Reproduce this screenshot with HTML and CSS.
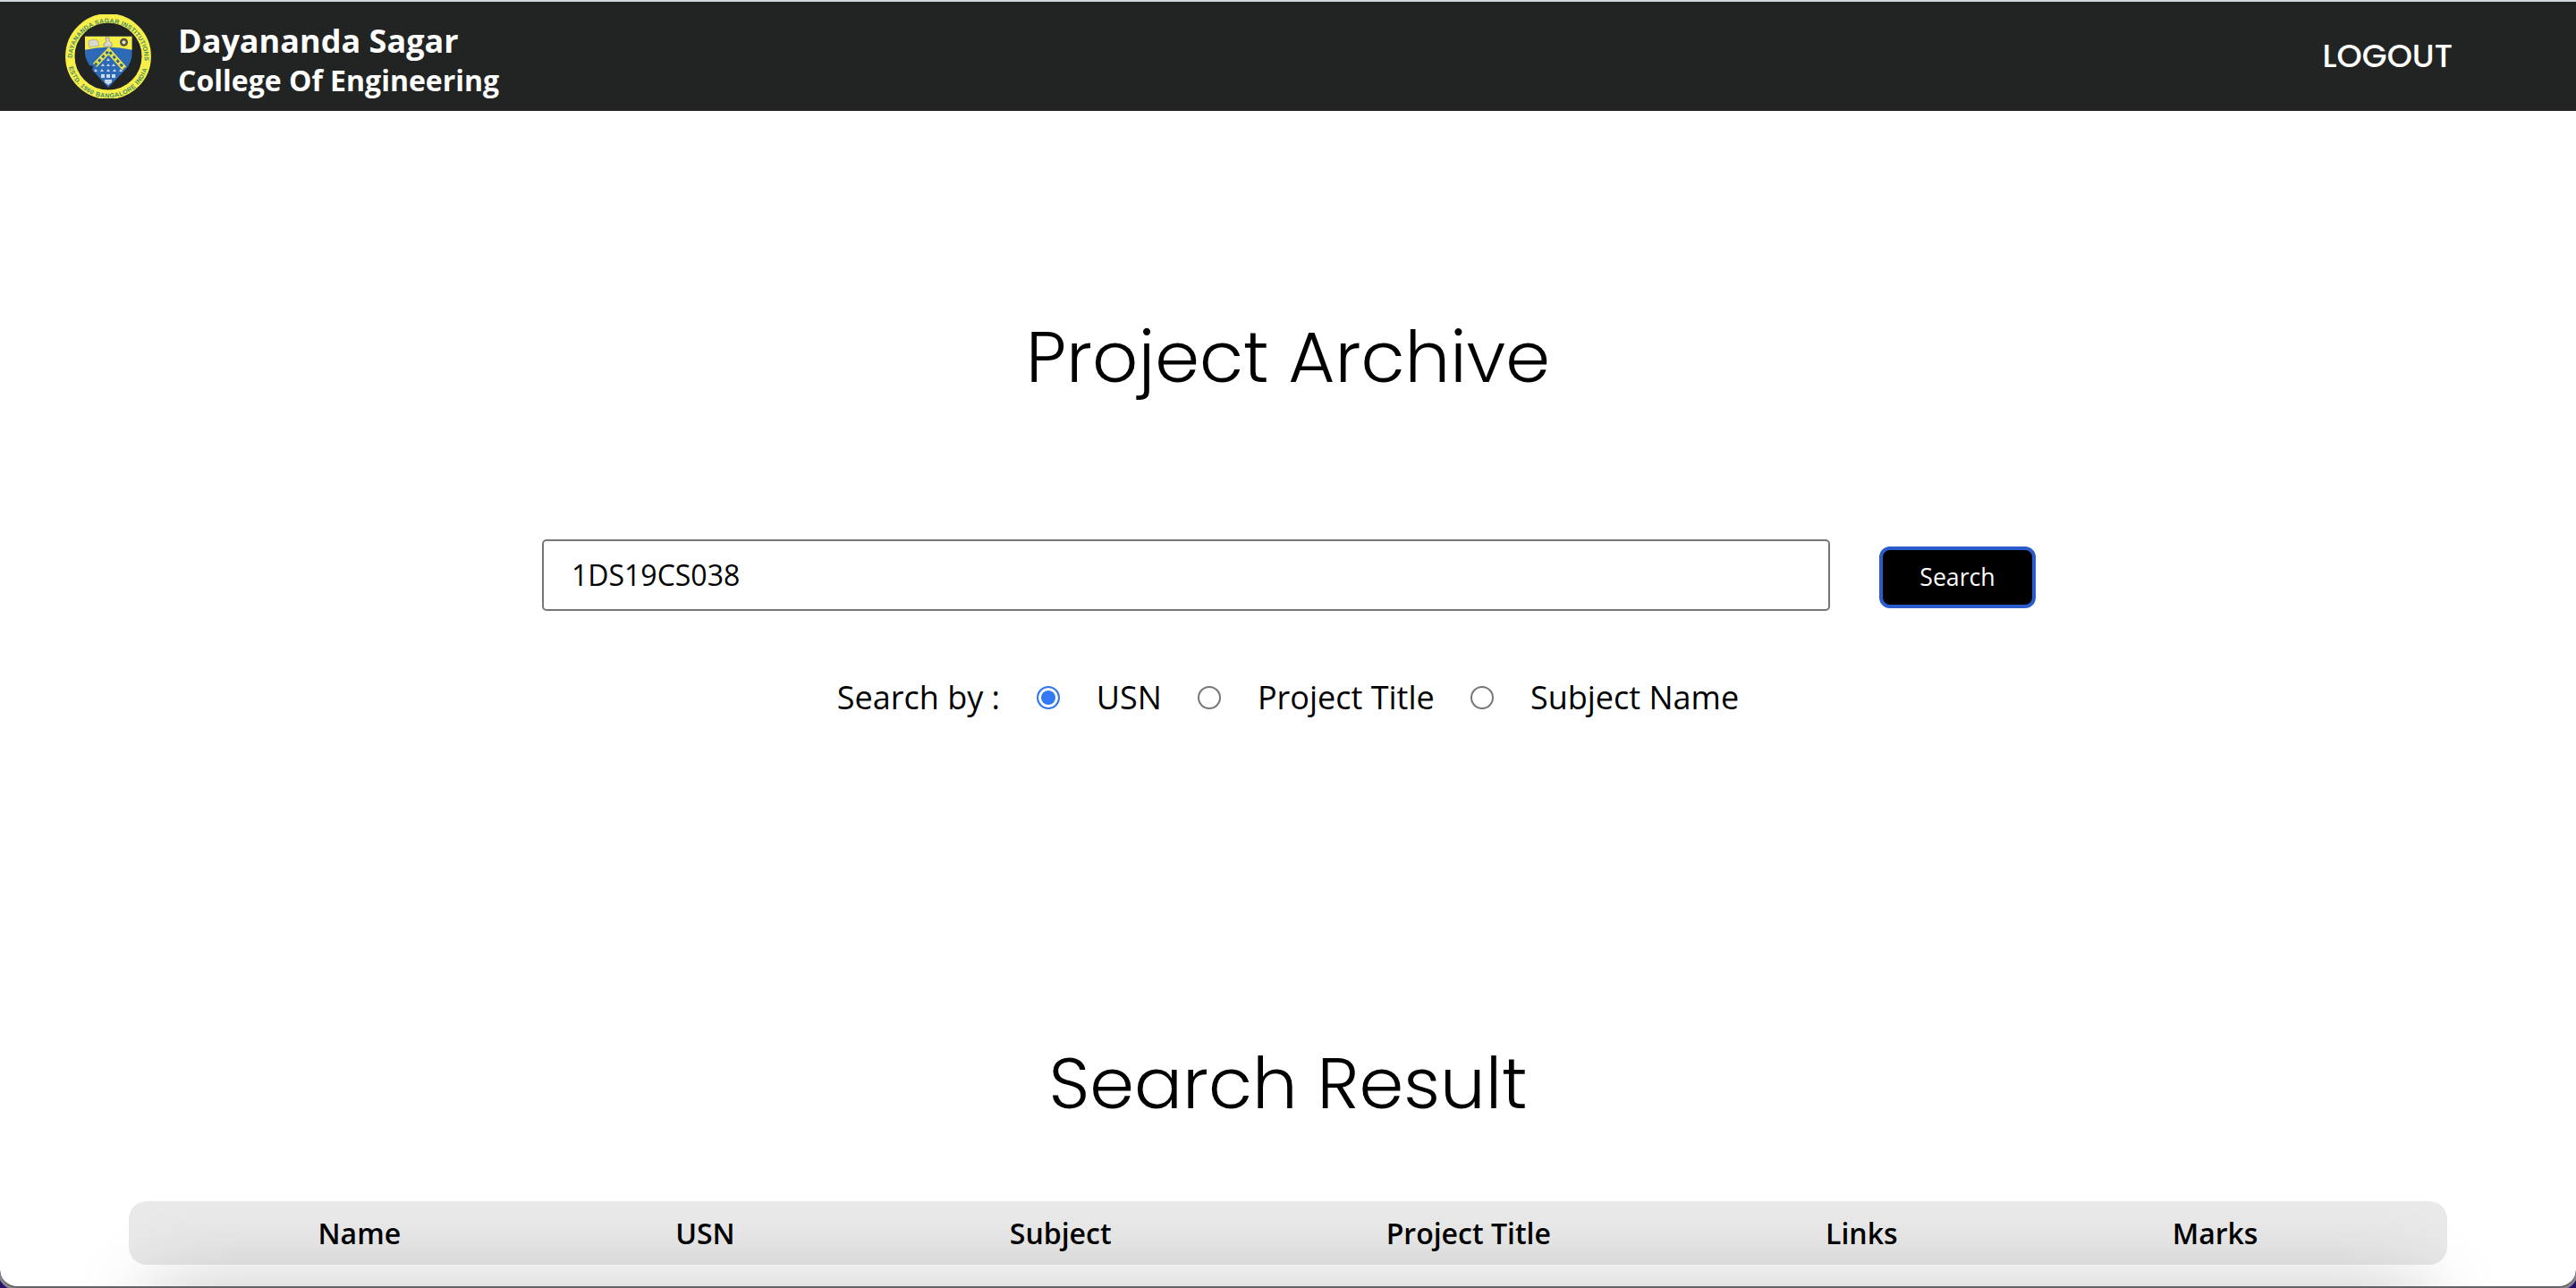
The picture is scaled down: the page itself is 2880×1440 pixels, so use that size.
FILE: index.html
```html
<!DOCTYPE html>
<html lang="en">
<head>
<meta charset="utf-8">
<title>Project Archive</title>
<link rel="stylesheet" href="styles.css">
</head>
<body>
<header class="navbar">
  <div class="brand">
    <svg class="crest" viewBox="0 0 96 94" width="96" height="94" aria-hidden="true">
      <defs>
        <path id="arc-top" d="M7.500 50 A40.500 40.500 0 1 1 88.500 50"/>
        <path id="arc-bottom" d="M2.800 53 A45.500 45.500 0 0 0 93.200 53"/>
      </defs>
      <circle cx="48" cy="47" r="42.700" fill="none" stroke="#f8ee48" stroke-width="10.400"/>
      <text class="crest-text"><textPath href="#arc-top" startOffset="1" textLength="128">DAYANANDA SAGAR INSTITUTIONS</textPath></text>
      <text class="crest-text"><textPath href="#arc-bottom" startOffset="6" textLength="118">ESTD. 1960 BANGALORE INDIA</textPath></text>
      <path d="M22 24.700H74.500V46Q74 53 69 60L48 82L30 62L31 58L27 57Q22.500 50 22 44Z" fill="#2d69b5"/>
      <path d="M22 24.700H74.500V39.700Q48 34 22 39.700Z" fill="#f8ee48"/>
      <path d="M26 30l5-2 5 1 2 6-6 1-5 1z" fill="#d9d9d0" stroke="#99997e" stroke-width=".6"/>
      <path d="M45 26h4v4l3 2v4h-9v-3l3-2z" fill="#d9d9d0" stroke="#77776a" stroke-width=".6"/>
      <circle cx="65.500" cy="31.300" r="3.300" fill="#e5e4d2" stroke="#514d3f" stroke-width="2.400"/>
      <path d="M33 57L48.500 41L66 60.500" fill="none" stroke="#e3df50" stroke-width="6"/>
      <path d="M33 57L48.500 41L66 60.500" fill="none" stroke="#2b608c" stroke-width="2.800" stroke-dasharray="3.200 2.800"/>
      <g fill="#c9d9ee">
        <path d="M48 49l2 3h-4zM42 55l2 3h-4zM48 55l2 3h-4zM54 55l2 3h-4zM34 61l2 3h-4zM41 61l2 3h-4zM48 61l2 3h-4zM55 61l2 3h-4zM62 61l2 3h-4z"/>
        <path d="M40 67h4v4h-4zM46 67h4v4h-4zM52 67h4v4h-4zM44 73h8v3l-4 3-4-3z"/>
      </g>
    </svg>
    <div class="brand-name">
      <span class="brand-line1">Dayananda Sagar</span>
      <span class="brand-line2">College Of Engineering</span>
    </div>
  </div>
  <a class="logout">LOGOUT</a>
</header>
<main>
  <h1 class="heading">Project Archive</h1>
  <form class="search-form">
    <div class="search-row">
      <input class="search-input" type="text" value="1DS19CS038">
      <button class="search-button" type="button">Search</button>
    </div>
    <div class="filters">
      <span class="filters-label">Search by :</span>
      <label class="option"><i class="radio radio-on"></i>USN</label>
      <label class="option"><i class="radio"></i>Project Title</label>
      <label class="option"><i class="radio"></i>Subject Name</label>
    </div>
  </form>
  <h2 class="heading heading-result">Search Result</h2>
  <div class="table-head">
    <span>Name</span><span>USN</span><span>Subject</span><span>Project Title</span><span>Links</span><span>Marks</span>
  </div>
</main>
<div class="dock-shadow"></div>
<div class="window-edge"></div>
</body>
</html>
```
FILE: styles.css
```css
* { box-sizing: border-box; }
body {
  margin: 0;
  height: 1440px;
  overflow: hidden;
  position: relative;
  background: #fff;
  color: #000;
  font-family: "Open Sans", "Noto Sans", sans-serif;
}
.navbar {
  display: flex;
  justify-content: space-between;
  align-items: flex-start;
  height: 124px;
  padding: 14px 138px 0 73px;
  border-top: 2px solid #d3d7de;
  background: #222423;
  color: #fff;
}
.brand { display: flex; gap: 30px; }
.crest { display: block; }
.crest-text { font: bold 7px "Liberation Sans", sans-serif; fill: #3f8a68; }
.brand-name { display: flex; flex-direction: column; font-weight: 700; padding-top: 5px; }
.brand-line1 { font-size: 36px; line-height: 50px; }
.brand-line2 { font-size: 32px; line-height: 38px; }
.logout { font: 500 36px/50px Poppins, Inter, sans-serif; padding-top: 22px; }
.heading {
  margin: 0;
  padding-top: 215px;
  font: 300 80px/120px Poppins, Inter, sans-serif;
  text-align: center;
}
.search-form { padding-top: 144px; }
.search-row { display: flex; padding-left: 606px; gap: 55px; align-items: flex-start; }
.search-input {
  width: 1440px;
  height: 80px;
  padding: 0 31px 2px;
  border: 2px solid #767676;
  border-radius: 5px;
  background: #fff;
  color: #000;
  font: 32px "Open Sans", "Noto Sans", sans-serif;
  outline: none;
}
.search-button {
  width: 175px;
  height: 69px;
  margin-top: 8px;
  padding: 0 0 2px;
  border: 4px solid #2a5dcb;
  border-radius: 12px;
  background: #000;
  color: #fff;
  font: 26.667px "Open Sans", "Noto Sans", sans-serif;
}
.filters { display: flex; justify-content: center; gap: 40.6px; padding-top: 71px; font-size: 36px; line-height: 50px; }
.filters-label { margin-right: 0.4px; }
.filters-label, .option-text { padding-top: 1px; }
.option { display: flex; align-items: center; gap: 40.6px; }
.radio { width: 26px; height: 26px; border: 2px solid #767676; border-radius: 50%; background: #fff; }
.radio-on { border-color: #3478f6; background: #3478f6; box-shadow: inset 0 0 0 3px #fff; }
.heading-result { padding-top: 346px; }
.table-head {
  display: flex;
  justify-content: space-around;
  width: 2592px;
  height: 71px;
  margin: 72px 144px 0;
  padding: 0 58px;
  border-radius: 20px;
  background: #e9e9e9;
  font-size: 32px;
  font-weight: 600;
  line-height: 72px;
}

/* Soft shade rising from the bottom of the window */
.dock-shadow {
  position: fixed;
  bottom: -200px;
  left: 170px;
  right: 170px;
  height: 200px;
  box-shadow: 0 0 90px rgba(0, 0, 0, .23);
}
/* Rounded lower corners of the window with the desktop behind */
.window-edge {
  position: fixed;
  inset: 0;
  border-bottom: 2px solid #646368;
  border-radius: 0 0 20px 20px;
  box-shadow: 0 0 0 3px #85858a, 0 0 0 20px #2a0f69;
}
```
